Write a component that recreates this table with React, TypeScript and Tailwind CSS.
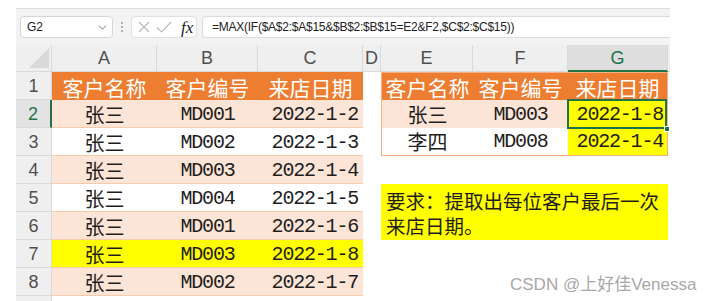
import { ChevronDown } from "lucide-react";

const sans = "font-['Liberation_Sans','Noto_Sans_CJK_SC',sans-serif]";
const cjk = "font-['Noto_Sans_CJK_SC',sans-serif]";
const mono = "font-['Liberation_Mono','Noto_Sans_CJK_SC',monospace]";

const peach = "bg-[#fce4d6]";
const yellow = "bg-[#ffff00]";

const leftRows = [
  { name: "张三", id: "MD001", date: "2022-1-2", bg: peach },
  { name: "张三", id: "MD002", date: "2022-1-3", bg: "bg-white" },
  { name: "张三", id: "MD003", date: "2022-1-4", bg: peach },
  { name: "张三", id: "MD004", date: "2022-1-5", bg: "bg-white" },
  { name: "张三", id: "MD001", date: "2022-1-6", bg: peach },
  { name: "张三", id: "MD003", date: "2022-1-8", bg: yellow },
  { name: "张三", id: "MD002", date: "2022-1-7", bg: peach },
  { name: "", id: "", date: "", bg: "bg-white" },
];

const cols = [
  { label: "A", w: "w-[105px]" },
  { label: "B", w: "w-[101px]" },
  { label: "C", w: "w-[105px]" },
  { label: "D", w: "w-[18px]" },
  { label: "E", w: "w-[92px]" },
  { label: "F", w: "w-[95px]" },
  { label: "G", w: "w-[100px]" },
];

function FormulaBar() {
  return (
    <div className={`flex h-[37px] items-center border-t border-[#dcdcdc] bg-[#f3f3f3] pl-[4px] ${sans}`}>
      <div className="flex h-[22px] w-[93px] items-center justify-between rounded-[4px] border border-[#d6d6d6] bg-white pl-[6px] pr-[3px]">
        <span className="text-[12px] font-medium text-[#222]">G2</span>
        <ChevronDown size={13} strokeWidth={1.5} className="text-[#555]" />
      </div>
      <div className="mx-[8px] flex flex-col gap-[2px]">
        <span className="h-[2px] w-[2px] rounded-full bg-[#9a9a9a]" />
        <span className="h-[2px] w-[2px] rounded-full bg-[#9a9a9a]" />
        <span className="h-[2px] w-[2px] rounded-full bg-[#9a9a9a]" />
      </div>
      <div className="flex h-[22px] w-[66px] items-center rounded-[4px] border border-[#e0e0e0] bg-white pl-[4px]">
        <svg width="16" height="16" viewBox="0 0 16 16" className="text-[#b9b9b9]">
          <path d="M3 3 L13 13 M13 3 L3 13" stroke="currentColor" strokeWidth="1.1" fill="none" />
        </svg>
        <svg width="18" height="16" viewBox="0 0 18 16" className="ml-[3px] text-[#b9b9b9]">
          <path d="M2 8.5 L6.5 13 L16 3" stroke="currentColor" strokeWidth="1.1" fill="none" />
        </svg>
        <span className="ml-[8px] font-['Liberation_Serif',serif] text-[17px] italic leading-none text-[#222]">fx</span>
      </div>
      <div className="ml-[5px] flex h-[22px] flex-1 items-center rounded-l-[4px] border border-r-0 border-[#dcdcdc] bg-white pl-[9px]">
        <span className="text-[12px] tracking-[-0.25px] text-[#222]">
          =MAX(IF($A$2:$A$15&amp;$B$2:$B$15=E2&amp;F2,$C$2:$C$15))
        </span>
      </div>
    </div>
  );
}

function ColumnHeaders() {
  return (
    <div className={`flex h-[27px] bg-[#efefef] ${sans}`}>
      <div className="flex w-[36px] items-end justify-end border-r border-b border-[#d9d9d9] pb-[3px] pr-[2px]">
        <svg width="20" height="20" viewBox="0 0 20 20">
          <polygon points="20,0 20,20 0,20" fill="#d9d9d9" />
        </svg>
      </div>
      {cols.map((c) =>
        c.label === "G" ? (
          <div
            key={c.label}
            className={`${c.w} flex items-center justify-center border-b-2 border-r border-b-[#217346] border-r-[#d9d9d9] bg-[#dedede] pt-[2px] text-[18px] text-[#217346]`}
          >
            {c.label}
          </div>
        ) : (
          <div
            key={c.label}
            className={`${c.w} flex items-center justify-center border-r border-b border-[#d9d9d9] text-[18px] text-[#505050]`}
          >
            {c.label}
          </div>
        )
      )}
      <div className="w-[2px] border-b border-[#d9d9d9]" />
    </div>
  );
}

function RowHeaders() {
  return (
    <div className={`flex w-[36px] flex-col bg-[#efefef] ${sans}`}>
      {[1, 2, 3, 4, 5, 6, 7, 8, 9].map((n) =>
        n === 2 ? (
          <div
            key={n}
            className="flex h-[28px] shrink-0 items-center justify-center border-b border-r-2 border-b-[#d9d9d9] border-r-[#217346] bg-[#e3e3e3] pt-[1px] text-[18px] text-[#217346]"
          >
            {n}
          </div>
        ) : (
          <div
            key={n}
            className="flex h-[28px] shrink-0 items-center justify-center border-r border-b border-[#d9d9d9] pt-[1px] text-[18px] text-[#505050]"
          >
            {n}
          </div>
        )
      )}
    </div>
  );
}

function LeftTable() {
  return (
    <div className="flex w-[311px] flex-col">
      <div className={`flex h-[28px] shrink-0 bg-[#ed7d31] pt-[3px] text-[21px] text-white ${cjk}`}>
        <div className="flex w-[105px] items-center justify-center">客户名称</div>
        <div className="flex w-[101px] items-center justify-center">客户编号</div>
        <div className="flex w-[105px] items-center justify-center">来店日期</div>
      </div>
      {leftRows.map((r, i) => (
        <div key={i} className={`flex h-[28px] shrink-0 border-b border-[#f8cbad] pt-[2px] text-[#1e1e1e] ${r.bg}`}>
          <div className={`flex w-[105px] items-center justify-center text-[20px] ${cjk}`}>{r.name}</div>
          <div className={`flex w-[101px] items-center justify-center text-[20px] tracking-[-1.2px] ${mono}`}>{r.id}</div>
          <div className={`flex w-[105px] items-center justify-end pr-[5px] text-[20px] tracking-[-1.2px] ${mono}`}>{r.date}</div>
        </div>
      ))}
    </div>
  );
}

function RightBlock() {
  return (
    <div className="flex w-[287px] flex-col">
      <div className="flex flex-col border border-[#f4b084]">
        <div className={`flex h-[27px] shrink-0 bg-[#ed7d31] pt-[2px] text-[21px] text-white ${cjk}`}>
          <div className="flex w-[91px] items-center justify-center">客户名称</div>
          <div className="flex w-[95px] items-center justify-center">客户编号</div>
          <div className="flex w-[99px] items-center justify-center">来店日期</div>
        </div>
        <div className={`flex h-[28px] shrink-0 text-[#1e1e1e] ${peach}`}>
          <div className={`flex w-[91px] items-center justify-center pt-[2px] text-[20px] ${cjk}`}>张三</div>
          <div className={`flex w-[95px] items-center justify-center pt-[2px] text-[20px] tracking-[-1.2px] ${mono}`}>MD003</div>
          <div className={`relative flex w-[99px] items-center justify-end pr-[4px] pt-[2px] text-[20px] tracking-[-1.2px] ${mono} ${yellow}`}>
            2022-1-8
            <div className="absolute -top-px -bottom-px -left-px right-0 border-2 border-[#217346]" />
            <div className="absolute -right-[3px] -bottom-[4px] h-[6px] w-[6px] border border-white bg-[#217346]" />
          </div>
        </div>
        <div className="flex h-[27px] shrink-0 bg-white text-[#1e1e1e]">
          <div className={`flex w-[91px] items-center justify-center pt-[1px] text-[20px] ${cjk}`}>李四</div>
          <div className={`flex w-[95px] items-center justify-center pt-[1px] text-[20px] tracking-[-1.2px] ${mono}`}>MD008</div>
          <div className={`flex w-[99px] items-center justify-end pr-[4px] pt-[1px] text-[20px] tracking-[-1.2px] ${mono} ${yellow}`}>2022-1-4</div>
        </div>
      </div>
      <div className="h-[28px] shrink-0" />
      <div className={`h-[56px] shrink-0 pl-[5px] pt-[4px] text-[19.5px] leading-[25px] text-[#1e1e1e] ${yellow} ${cjk}`}>
        要求：提取出每位客户最后一次
        <br />
        来店日期。
      </div>
    </div>
  );
}

export default function App() {
  return (
    <div className="relative h-[301px] w-[710px] overflow-hidden bg-white">
      <div className="ml-[16px] mt-[8px] flex w-[654px] flex-col">
        <FormulaBar />
        <ColumnHeaders />
        <div className="flex">
          <RowHeaders />
          <LeftTable />
          <div className="w-[18px]" />
          <RightBlock />
        </div>
      </div>
      <div className={`absolute left-[510px] top-[272px] text-[17px] text-[#a8a8a8] ${sans}`}>
        CSDN @上好佳Venessa
      </div>
    </div>
  );
}
